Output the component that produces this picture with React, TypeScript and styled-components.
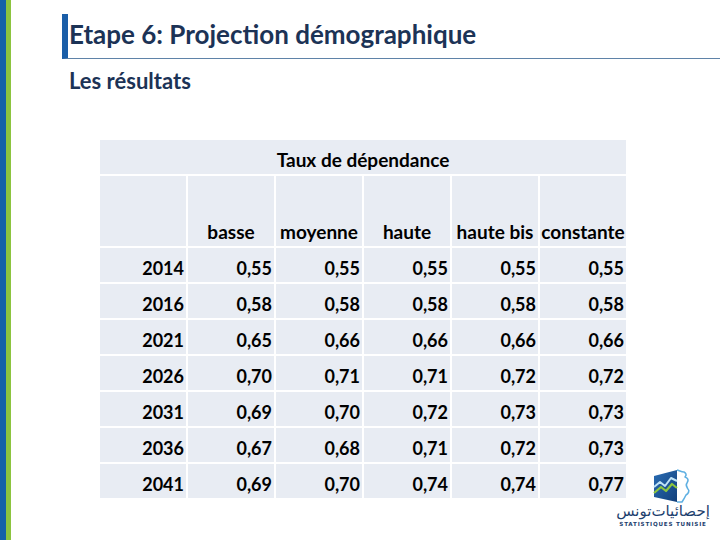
import React from "react";
import styled, { createGlobalStyle } from "styled-components";

const Global = createGlobalStyle`
  html, body { margin: 0; padding: 0; background: #fff; }
  body { font-family: "Lato", "Open Sans", sans-serif; }
`;

const Slide = styled.div`
  position: relative;
  width: 720px;
  height: 540px;
  display: flex;
  overflow: hidden;
  background: #fff;
`;

const Stripes = styled.div`
  flex: 0 0 11px;
  display: flex;
`;

const Stripe = styled.div<{ $color: string; $w: number }>`
  width: ${(p) => p.$w}px;
  background: ${(p) => p.$color};
`;

const Content = styled.div`
  flex: 1;
  display: flex;
  flex-direction: column;
  padding-top: 14px;
  padding-left: 51px;
`;

const TitleBar = styled.div`
  height: 45px;
  box-sizing: border-box;
  border-left: 6px solid #1a5ea8;
  border-bottom: 1px solid #5f83a8;
  display: flex;
  align-items: center;
  padding: 0 0 5px 1px;
`;

const Title = styled.h1`
  margin: 0;
  font-family: "Lato", sans-serif;
  font-weight: 700;
  font-size: 26px;
  line-height: 30px;
  color: #1c3356;
`;

const Subtitle = styled.h2`
  margin: 9px 0 0 7px;
  font-family: "Lato", sans-serif;
  font-weight: 700;
  font-size: 22px;
  color: #1c3356;
  line-height: 26px;
`;

const Table = styled.div`
  margin: 46px 0 0 38px;
  width: 526px;
  display: grid;
  grid-template-columns: repeat(6, 86px);
  grid-auto-rows: 34px;
  gap: 2px;
  background: #fff;
`;

const Cell = styled.div<{ $span?: number; $rows?: number; $head?: boolean }>`
  grid-column: span ${(p) => p.$span ?? 1};
  grid-row: span ${(p) => p.$rows ?? 1};
  background: #e8ecf3;
  display: flex;
  align-items: flex-end;
  justify-content: ${(p) => (p.$head ? "center" : "flex-end")};
  padding: 0 2px 4px 2px;
  box-sizing: border-box;
  font-family: "Lato", sans-serif;
  font-weight: 700;
  font-size: ${(p) => (p.$head ? 19 : 18)}px;
  line-height: 20px;
  color: #000;
  white-space: nowrap;
`;

const Logo = styled.div`
  position: absolute;
  left: 618px;
  top: 469px;
  width: 90px;
  display: flex;
  flex-direction: column;
  align-items: center;
`;

const LogoArabic = styled.div`
  font-family: "DejaVu Sans", sans-serif;
  font-size: 15px;
  line-height: 16px;
  color: #1d3f6e;
  white-space: nowrap;
  direction: rtl;
`;

const LogoLatin = styled.div`
  font-family: "DejaVu Sans", sans-serif;
  font-weight: 700;
  font-size: 5.6px;
  letter-spacing: 0.8px;
  color: #1d3f6e;
  white-space: nowrap;
  margin-top: 2px;
`;

const cols = ["basse", "moyenne", "haute", "haute bis", "constante"];
const data: [string, string[]][] = [
  ["2014", ["0,55", "0,55", "0,55", "0,55", "0,55"]],
  ["2016", ["0,58", "0,58", "0,58", "0,58", "0,58"]],
  ["2021", ["0,65", "0,66", "0,66", "0,66", "0,66"]],
  ["2026", ["0,70", "0,71", "0,71", "0,72", "0,72"]],
  ["2031", ["0,69", "0,70", "0,72", "0,73", "0,73"]],
  ["2036", ["0,67", "0,68", "0,71", "0,72", "0,73"]],
  ["2041", ["0,69", "0,70", "0,74", "0,74", "0,77"]],
];

function LogoMark() {
  return (
    <svg width="40" height="34" viewBox="0 0 40 34" style={{ marginLeft: 18 }}>
      <defs>
        <linearGradient id="lg" x1="0" y1="0" x2="1" y2="1">
          <stop offset="0" stopColor="#2a6db4" />
          <stop offset="1" stopColor="#123f7a" />
        </linearGradient>
      </defs>
      <polygon points="2,7 25,1 25,33 2,28" fill="url(#lg)" />
      <polyline
        points="2,18 8,13 13,17 19,9 25,12"
        fill="none"
        stroke="#bfe3f7"
        strokeWidth="2"
        strokeLinejoin="round"
      />
      <polyline
        points="2,24 9,18 14,22 20,15 25,19"
        fill="none"
        stroke="#8dc63f"
        strokeWidth="2.2"
        strokeLinejoin="round"
      />
      <path
        d="M25,1 C28,2 30,3 32,3 C34,4 35,6 33,8 C36,9 37,11 35,14 C33,16 35,18 36,20 C38,22 36,25 34,26 C33,28 32,30 30,33 L25,33"
        fill="none"
        stroke="#5fb0e2"
        strokeWidth="1.6"
        strokeLinejoin="round"
      />
    </svg>
  );
}

export default function App() {
  return (
    <>
      <Global />
      <Slide>
        <Stripes>
          <Stripe $color="#1462a8" $w={6} />
          <Stripe $color="#8cc43f" $w={5} />
        </Stripes>
        <Content>
          <TitleBar>
            <Title>Etape 6: Projection démographique</Title>
          </TitleBar>
          <Subtitle>Les résultats</Subtitle>
          <Table>
            <Cell $span={6} $head>
              Taux de dépendance
            </Cell>
            <Cell $rows={2} />
            {cols.map((c) => (
              <Cell key={c} $head $rows={2}>
                {c}
              </Cell>
            ))}
            {data.map(([year, vals]) => (
              <React.Fragment key={year}>
                <Cell>{year}</Cell>
                {vals.map((v, i) => (
                  <Cell key={i}>{v}</Cell>
                ))}
              </React.Fragment>
            ))}
          </Table>
        </Content>
        <Logo>
          <LogoMark />
          <LogoArabic>إحصائيات‌تونس</LogoArabic>
          <LogoLatin>STATISTIQUES TUNISIE</LogoLatin>
        </Logo>
      </Slide>
    </>
  );
}
